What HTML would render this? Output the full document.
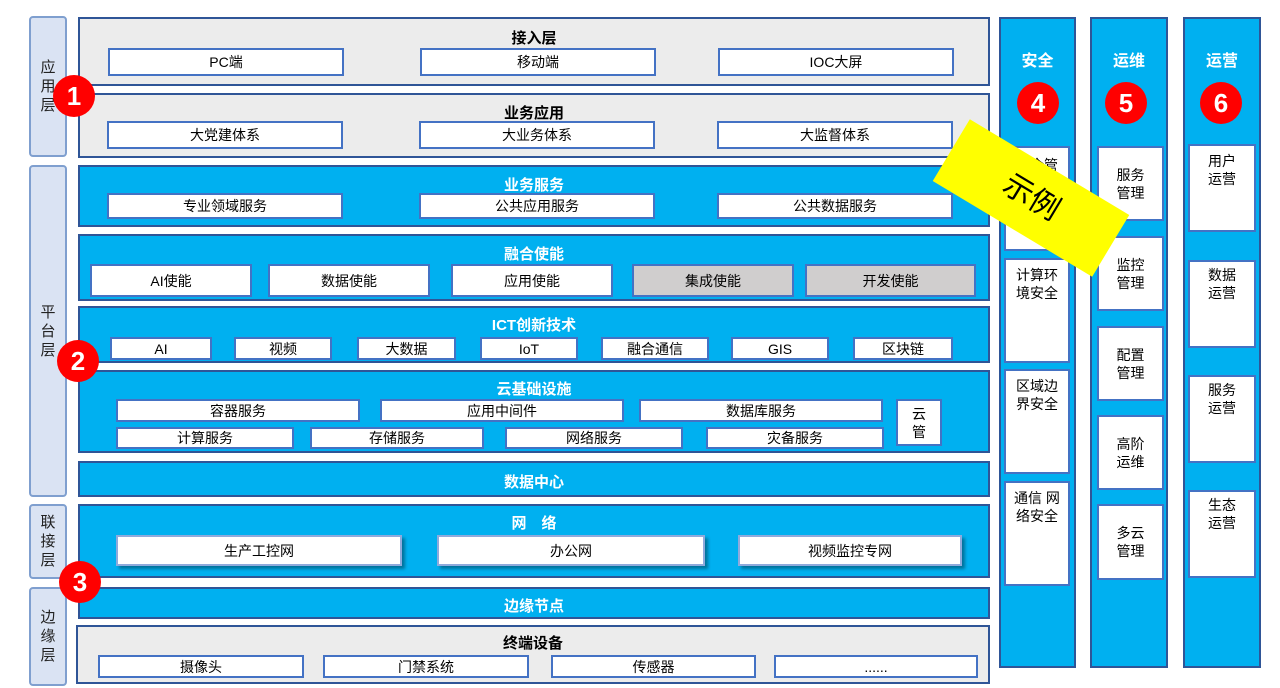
<!DOCTYPE html>
<html><head><meta charset="utf-8"><style>
*{margin:0;padding:0;box-sizing:border-box}
body{width:1280px;height:688px;background:#fff;position:relative;overflow:hidden;font-family:"Liberation Sans","Noto Sans CJK SC",sans-serif;color:#000}
.a{position:absolute}
.side{position:absolute;left:29px;width:38px;background:#DAE3F3;border:2px solid #7F9FCF;border-radius:4px;font-size:15px;line-height:19px;text-align:center;display:flex;align-items:center;justify-content:center;color:#222}
.g{position:absolute;left:78px;width:912px;background:#ECECEC;border:2px solid #2F5597}
.b{position:absolute;left:78px;width:912px;background:#00B0F0;border:2px solid #2F5597}
.t{position:absolute;left:0;right:0;text-align:center;font-weight:bold;font-size:15px}
.b .t{color:#fff}
.i{position:absolute;background:#fff;border:2px solid #4472C4;font-size:14px;text-align:center;display:flex;align-items:center;justify-content:center}
.gr{background:#D0CECE}
.sh{box-shadow:3px 3px 3px rgba(0,0,0,.35);border-color:#8FAADC}
.col{position:absolute;top:17px;height:651px;background:#00B0F0;border:2px solid #2F5597}
.ct{position:absolute;left:0;right:0;top:28px;text-align:center;color:#fff;font-weight:bold;font-size:16px}
.c{position:absolute;width:42px;height:42px;border-radius:50%;background:#F00;color:#fff;font-weight:bold;font-size:26px;text-align:center;line-height:42px;font-family:"Liberation Sans",sans-serif}
.r{position:absolute;background:#fff;border:2px solid #4472C4;font-size:14px;line-height:18px;text-align:center;padding:0 6px}
</style></head><body>
<div class="side" style="top:16px;height:141px">应<br>用<br>层</div>
<div class="side" style="top:165px;height:332px">平<br>台<br>层</div>
<div class="side" style="top:504px;height:75px">联<br>接<br>层</div>
<div class="side" style="top:587px;height:99px">边<br>缘<br>层</div>

<div class="g" style="top:17px;height:69px"><div class="t" style="top:8px">接入层</div></div>
<div class="i" style="left:108px;top:48px;width:236px;height:28px">PC端</div>
<div class="i" style="left:420px;top:48px;width:236px;height:28px">移动端</div>
<div class="i" style="left:718px;top:48px;width:236px;height:28px">IOC大屏</div>

<div class="g" style="top:93px;height:65px"><div class="t" style="top:7px">业务应用</div></div>
<div class="i" style="left:107px;top:121px;width:236px;height:28px">大党建体系</div>
<div class="i" style="left:419px;top:121px;width:236px;height:28px">大业务体系</div>
<div class="i" style="left:717px;top:121px;width:236px;height:28px">大监督体系</div>

<div class="b" style="top:165px;height:62px"><div class="t" style="top:7px">业务服务</div></div>
<div class="i" style="left:107px;top:193px;width:236px;height:26px">专业领域服务</div>
<div class="i" style="left:419px;top:193px;width:236px;height:26px">公共应用服务</div>
<div class="i" style="left:717px;top:193px;width:236px;height:26px">公共数据服务</div>

<div class="b" style="top:234px;height:67px"><div class="t" style="top:7px">融合使能</div></div>
<div class="i" style="left:90px;top:264px;width:162px;height:33px">AI使能</div>
<div class="i" style="left:268px;top:264px;width:162px;height:33px">数据使能</div>
<div class="i" style="left:451px;top:264px;width:162px;height:33px">应用使能</div>
<div class="i gr" style="left:632px;top:264px;width:162px;height:33px">集成使能</div>
<div class="i gr" style="left:805px;top:264px;width:171px;height:33px">开发使能</div>

<div class="b" style="top:306px;height:57px"><div class="t" style="top:6px">ICT创新技术</div></div>
<div class="i" style="left:110px;top:337px;width:102px;height:23px">AI</div>
<div class="i" style="left:234px;top:337px;width:98px;height:23px">视频</div>
<div class="i" style="left:357px;top:337px;width:99px;height:23px">大数据</div>
<div class="i" style="left:480px;top:337px;width:98px;height:23px">IoT</div>
<div class="i" style="left:601px;top:337px;width:108px;height:23px">融合通信</div>
<div class="i" style="left:731px;top:337px;width:98px;height:23px">GIS</div>
<div class="i" style="left:853px;top:337px;width:100px;height:23px">区块链</div>

<div class="b" style="top:370px;height:83px"><div class="t" style="top:6px">云基础设施</div></div>
<div class="i" style="left:116px;top:399px;width:244px;height:23px">容器服务</div>
<div class="i" style="left:380px;top:399px;width:244px;height:23px">应用中间件</div>
<div class="i" style="left:639px;top:399px;width:244px;height:23px">数据库服务</div>
<div class="i" style="left:116px;top:427px;width:178px;height:22px">计算服务</div>
<div class="i" style="left:310px;top:427px;width:174px;height:22px">存储服务</div>
<div class="i" style="left:505px;top:427px;width:178px;height:22px">网络服务</div>
<div class="i" style="left:706px;top:427px;width:178px;height:22px">灾备服务</div>
<div class="i" style="left:896px;top:399px;width:46px;height:47px;line-height:18px">云<br>管</div>

<div class="b" style="top:461px;height:36px"><div class="t" style="top:8px">数据中心</div></div>

<div class="b" style="top:504px;height:74px"><div class="t" style="top:6px">网　络</div></div>
<div class="i sh" style="left:116px;top:535px;width:286px;height:31px">生产工控网</div>
<div class="i sh" style="left:437px;top:535px;width:268px;height:31px">办公网</div>
<div class="i sh" style="left:738px;top:535px;width:224px;height:31px">视频监控专网</div>

<div class="b" style="top:587px;height:32px"><div class="t" style="top:6px">边缘节点</div></div>

<div class="g" style="left:76px;width:914px;top:625px;height:59px"><div class="t" style="top:5px">终端设备</div></div>
<div class="i" style="left:98px;top:655px;width:206px;height:23px">摄像头</div>
<div class="i" style="left:323px;top:655px;width:206px;height:23px">门禁系统</div>
<div class="i" style="left:551px;top:655px;width:205px;height:23px">传感器</div>
<div class="i" style="left:774px;top:655px;width:204px;height:23px">......</div>

<div class="col" style="left:999px;width:77px"><div class="ct">安全</div></div>
<div class="col" style="left:1090px;width:78px"><div class="ct">运维</div></div>
<div class="col" style="left:1183px;width:78px"><div class="ct">运营</div></div>

<div class="r" style="left:1004px;top:146px;width:66px;height:105px;padding-top:8px">安全管理</div>
<div class="r" style="left:1004px;top:258px;width:66px;height:105px;padding-top:6px">计算环境安全</div>
<div class="r" style="left:1004px;top:369px;width:66px;height:105px;padding-top:6px">区域边界安全</div>
<div class="r" style="left:1004px;top:481px;width:66px;height:105px;padding-top:6px;padding-left:4px;padding-right:4px">通信 网络安全</div>

<div class="r" style="left:1097px;top:146px;width:67px;height:75px;padding-top:18px;padding-left:14px;padding-right:14px">服务管理</div>
<div class="r" style="left:1097px;top:236px;width:67px;height:75px;padding-top:18px;padding-left:14px;padding-right:14px">监控管理</div>
<div class="r" style="left:1097px;top:326px;width:67px;height:75px;padding-top:18px;padding-left:14px;padding-right:14px">配置管理</div>
<div class="r" style="left:1097px;top:415px;width:67px;height:75px;padding-top:18px;padding-left:14px;padding-right:14px">高阶运维</div>
<div class="r" style="left:1097px;top:504px;width:67px;height:76px;padding-top:18px;padding-left:14px;padding-right:14px">多云管理</div>

<div class="r" style="left:1188px;top:144px;width:68px;height:88px;padding-top:6px;padding-left:15px;padding-right:15px">用户运营</div>
<div class="r" style="left:1188px;top:260px;width:68px;height:88px;padding-top:4px;padding-left:15px;padding-right:15px">数据运营</div>
<div class="r" style="left:1188px;top:375px;width:68px;height:88px;padding-top:4px;padding-left:15px;padding-right:15px">服务运营</div>
<div class="r" style="left:1188px;top:490px;width:68px;height:88px;padding-top:4px;padding-left:15px;padding-right:15px">生态运营</div>

<div class="c" style="left:1017px;top:82px">4</div>
<div class="c" style="left:1105px;top:82px">5</div>
<div class="c" style="left:1200px;top:82px">6</div>

<div class="a" style="left:938px;top:162px;width:186px;height:72px;background:#FFFF00;transform:rotate(31deg);font-size:30px;text-align:center;line-height:72px">示例</div>

<div class="c" style="left:53px;top:75px">1</div>
<div class="c" style="left:57px;top:340px">2</div>
<div class="c" style="left:59px;top:561px">3</div>
</body></html>
